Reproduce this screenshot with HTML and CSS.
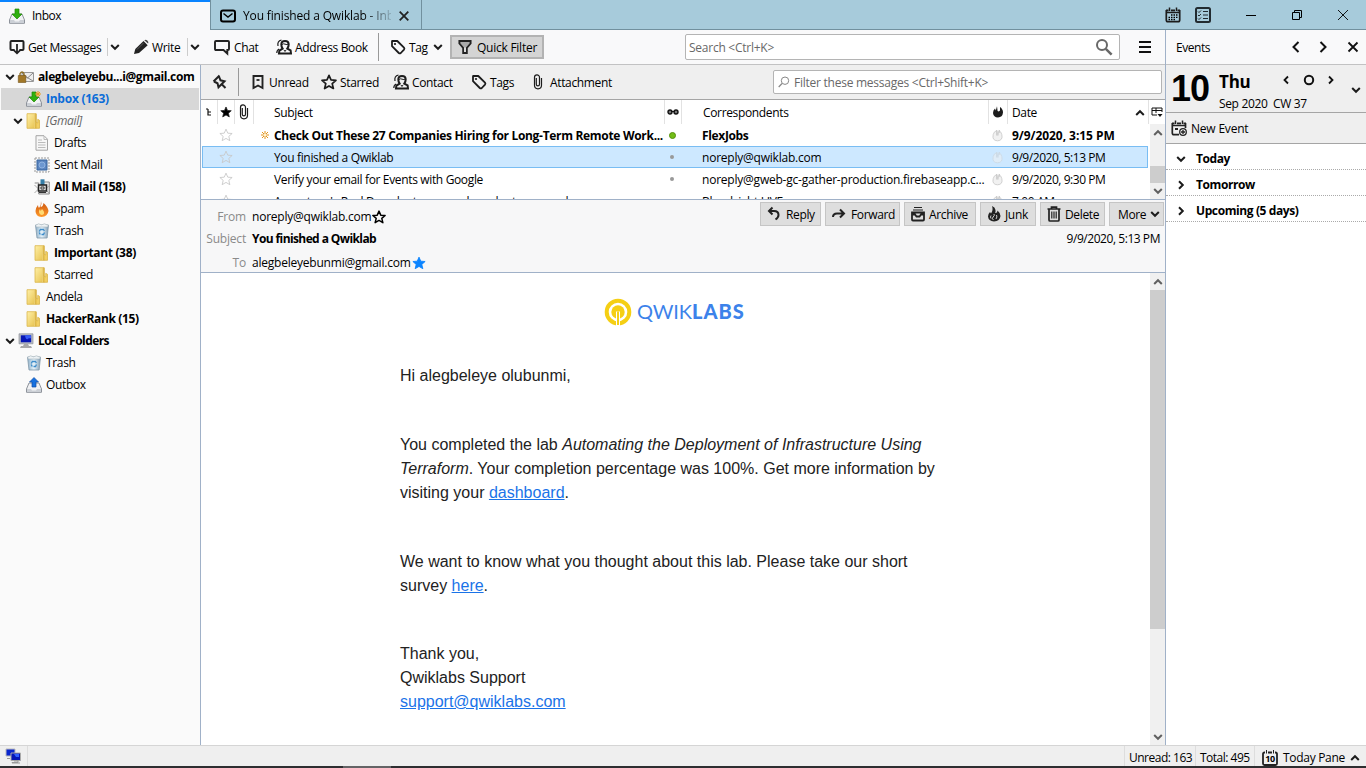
FILE: index.html
```html
<!DOCTYPE html>
<html lang="en">
<head>
<meta charset="utf-8">
<title>Inbox</title>
<link rel="stylesheet" href="styles.css">
</head>
<body>
<svg class="defs" aria-hidden="true">
  <defs>
    <linearGradient id="gold" x1="0" x2="1" y1="0" y2="1"><stop offset="0" stop-color="#fff0a8"/><stop offset="1" stop-color="#e6c04a"/></linearGradient>
    <linearGradient id="fire" x1="0" x2="0" y1="0" y2="1"><stop offset="0" stop-color="#c9500c"/><stop offset="1" stop-color="#ff9a2a"/></linearGradient>
    <linearGradient id="bin" x1="0" x2="1" y1="0" y2="0"><stop offset="0" stop-color="#8fb0c8"/><stop offset=".5" stop-color="#e6f3fb"/><stop offset="1" stop-color="#7f9db5"/></linearGradient>
    <symbol id="down" viewBox="0 0 10 10"><path d="M1.200 3l3.800 3.800L8.800 3" fill="none" stroke="currentColor" stroke-width="2"/></symbol>
    <symbol id="star" viewBox="0 0 16 16"><path d="M8 1.300l2 4.600 5 .4-3.800 3.300 1.200 4.900L8 11.900l-4.400 2.600 1.200-4.900L1 6.300l5-.4z" stroke="currentColor" stroke-linejoin="round"/></symbol>
    <symbol id="tag" viewBox="0 0 16 16"><path d="M2 2.200v5l6.800 6.800q1 .8 2 0l3.200-3.400q.8-1 0-1.900L7.300 2H2.200z" fill="none" stroke="currentColor" stroke-width="1.800" stroke-linejoin="round"/><circle cx="5" cy="5" r="1.100" fill="currentColor"/></symbol>
    <symbol id="person" viewBox="0 0 16 16"><path d="M2 7q-1-5 3.500-6M.8 14q0-3 2.400-4" fill="none" stroke="currentColor" stroke-width="1.200"/><path d="M6.600 9.700Q5.300 7.900 5.300 5.300 5.400 2 9 2t3.700 3.300q0 2.600-1.400 4.400l3.300 1.700.4 3.100H3l.4-2.900z" fill="none" stroke="currentColor" stroke-width="2"/><path d="M6.200 5.600l1.300-.8 3.400.8 1-.3M8 11l1 1.500 1-1.500" fill="none" stroke="currentColor"/></symbol>
    <symbol id="clip" viewBox="0 0 10 16"><path d="M3.300 4v6.200a1.600 1.600 0 003.200 0V3.400a2.500 2.500 0 00-5 0v7.900a3.500 3.500 0 007 0V4" fill="none" stroke="currentColor" stroke-width="1.200"/></symbol>
    <symbol id="inbox" viewBox="0 0 16 16"><path d="M3 6h10l2.500 6v3.300H.5V12z" fill="#f1f2f4" stroke="#8d929a"/><path d="M1 12h4l1 1.500h4l1-1.500h4v3H1z" fill="#ccd0d6"/><path d="M6 1h4v5h3L8 11 3 6h3z" fill="#2fb00f" stroke="#218906" stroke-width=".7"/></symbol>
    <symbol id="folder" viewBox="0 0 16 16"><path d="M1 .7h9v14.600H1z" fill="url(#gold)" stroke="#dbb64c" stroke-width=".8"/><path d="M10 .7V15.300h3.500v-8l-1.800-1V10L10 9z" fill="#f2cf62" stroke="#d6ad3b" stroke-width=".7"/><path d="M8.500 1v14" stroke="#ebce70"/></symbol>
    <symbol id="trash" viewBox="0 0 16 16"><path d="M1.500 2h13l-1.400 13H3z" fill="url(#bin)" stroke="#8198aa" stroke-width=".8"/><path d="M1.500 2.500l3-1.700 3 1 3-1 4 1.700-1 1.500H2.500z" fill="#edf2f5" stroke="#a6b1b9" stroke-width=".6"/><path d="M5.200 8.500l1.200-2h3l1 1.500M10.500 9.500l-1 2h-2M5.200 9.500l1 2" stroke="#3d8cca" fill="none" stroke-width="1.300"/></symbol>
    <symbol id="pc" viewBox="0 0 16 16"><path d="M1 .8h14v10H1z" fill="#b9bdc4" stroke="#8d9199" stroke-width=".7"/><path d="M2.800 2.300h10.400v7H2.800z" fill="#0716b5"/><path d="M7 2.300h6v3q-3-.5-3.500 1-2 .3-2.500-4z" fill="#375cf4"/><path d="M6 11h4l1 2h2l1 2H2l1-2h2z" fill="#a8a8aa"/></symbol>
    <symbol id="flame" viewBox="0 0 16 16"><path d="M8.500.8q1 2.500-.5 5-1 1.700.7 2.300 1.900-.3 1.600-3.600 3.900 3 3.600 6-.3 4.700-5.800 4.900-5.700-.3-6-4.700 0-2.900 2.500-5 0 2 .8 2.700Q7.500 4 8.500.8z" fill="currentColor"/></symbol>
    <symbol id="blaze" viewBox="0 0 12 12"><path d="M5 .3L5.600 5l1.200.6L8 4.500 8 1q3 2 3 5.500-.5 4.800-5 5-4.500-.2-5-4.500Q1 4 3 2.500l.8 2z" fill="currentColor"/></symbol>
    <symbol id="ghost" viewBox="0 0 12 14"><path d="M5.500 1.500Q2 2.500 1.300 6-.2 12.500 6 12.800q6.200-.3 4.700-6.800Q10 2.800 7.500 1.500L6.400 7z" fill="#f1f1f1" stroke="#cdcdcd"/><path d="M5 1v6M8.200 1v3" stroke="#c9c9c9"/></symbol>
    <symbol id="cal" viewBox="0 0 16 16"><path d="M1.300 3v10q0 1.700 1.700 1.700h10q1.700 0 1.700-1.700V3M1 3.300h2.500M6 3.300h4M12.500 3.300H15M1.200 5.500h13.600" fill="none" stroke="currentColor" stroke-width="1.700"/><path d="M4.500.5V4M11.500.5V4" stroke="currentColor" stroke-width="1.500"/></symbol>
  </defs>
</svg>

<header class="tabs">
  <div class="tab tab-on"><svg class="i16"><use href="#inbox"/></svg><span>Inbox</span></div>
  <div class="tab tab-off">
    <svg class="i16" viewBox="0 0 16 16"><rect x="1" y="2.500" width="14" height="11" rx="2" fill="none" stroke="#000" stroke-width="2"/><path d="M3.500 5.500L8 9l4.500-3.500" fill="none" stroke="#000" stroke-width="1.400"/></svg>
    <span class="fade">You finished a Qwiklab - Inb</span>
    <svg class="i10" viewBox="0 0 10 10"><path d="M.7.7l8.600 8.600M9.300.7L.7 9.300" stroke="#222" stroke-width="1.800"/></svg>
  </div>
  <div class="window">
    <svg class="i16" viewBox="0 0 16 16"><use href="#cal"/><path d="M6 8h1.500M8.500 8H10M11 8h1.500M3.500 10.300H5M6 10.300h1.500M8.500 10.300H10M11 10.300h1.500M3.500 12.500H5M6 12.500h1.500M8.500 12.500H10" stroke="#000" stroke-width="1.300"/></svg>
    <svg class="i16" viewBox="0 0 16 16"><rect x="1" y="1" width="14" height="14" rx="1.500" fill="none" stroke="#222b30" stroke-width="2"/><path d="M3 4.500l1 1L6 3.500M3 8l1 1 2-2M3 11.500l1 1 2-2M8 4.500h5M8 8h5M8 11.500h5" stroke="#222b30" fill="none"/></svg>
    <svg class="i12" viewBox="0 0 12 12"><path d="M1 6.500h10" stroke="#000"/></svg>
    <svg class="i12" viewBox="0 0 12 12"><path d="M1.500 3.500h7v7h-7zM3.500 3.500v-2h7v7h-2" fill="none" stroke="#000"/></svg>
    <svg class="i12" viewBox="0 0 12 12"><path d="M1 1l10 10M11 1L1 11" stroke="#000" stroke-width=".9"/></svg>
  </div>
</header>

<div class="middle">
  <div class="work">
    <nav class="toolbar">
      <div class="btn"><svg class="i16" viewBox="0 0 16 16"><path d="M5.500 11H2.500q-1 0-1-1V3q0-1 1-1h11q1 0 1 1v7q0 1-1 1h-3" fill="none" stroke="#222" stroke-width="2"/><path d="M8 5v9M4.500 10.800L8 14.300l3.500-3.500" fill="none" stroke="#222" stroke-width="1.800"/></svg><span>Get Messages</span></div>
      <div class="drop"><svg class="i10"><use href="#down"/></svg></div>
      <div class="btn write"><svg class="i16" viewBox="0 0 16 16"><path d="M0 15l1.300-5L9.500 2l4.200 4.200L5 14z" fill="#222"/><path d="M10.300 1.300q1.500-1 3 .3 1.600 1.500.8 3z" fill="#444"/><path d="M3 10.500l6.500-6.500" stroke="#777" stroke-width=".7"/></svg><span>Write</span></div>
      <div class="drop"><svg class="i10"><use href="#down"/></svg></div>
      <div class="btn chat"><svg class="i16" viewBox="0 0 16 16"><path d="M2 2h12q1 0 1 1v7q0 1-1 1h-.7v3.500L9.500 11H2q-1 0-1-1V3q0-1 1-1z" fill="none" stroke="#222" stroke-width="1.900"/></svg><span>Chat</span></div>
      <div class="btn book"><svg class="i16"><use href="#person"/></svg><span>Address Book</span></div>
      <div class="rule"></div>
      <div class="btn tagb"><svg class="i16"><use href="#tag"/></svg><span>Tag</span><svg class="i10"><use href="#down"/></svg></div>
      <div class="quick"><svg class="i14" viewBox="0 0 14 14"><path d="M1.400 1h11.200v2.500L8.800 8v5H5.200V8L1.400 3.500z" fill="#aaa" stroke="#222" stroke-width="1.900"/><path d="M6.200 7.500h1.600v4.500H6.200z" fill="#eee"/></svg><span>Quick Filter</span></div>
      <div class="search"><span>Search &lt;Ctrl+K&gt;</span><svg class="i18" viewBox="0 0 18 18"><circle cx="7" cy="7" r="5" fill="none" stroke="#686868" stroke-width="2"/><path d="M10.800 10.800l5.800 5.800" stroke="#686868" stroke-width="2.500"/></svg></div>
      <svg class="i12 burger" viewBox="0 0 12 12"><path d="M0 1h12M0 6h12M0 11h12" stroke="#111" stroke-width="2"/></svg>
    </nav>

    <div class="panes">
      <aside class="folders">
        <div class="f l0 b"><svg class="i10"><use href="#down"/></svg><svg class="i16" viewBox="0 0 16 16"><path d="M4 3.500h11.500v9H4z" fill="#eee" stroke="#999"/><path d="M4 12l4.500-4L15 12M4 4l5.500 5L15 4" fill="none" stroke="#888"/><path d="M2 7V4.500q2-3 4 0V7" fill="none" stroke="#8a6a20" stroke-width="1.300"/><path d="M.3 6.500h7.500v7H.3z" fill="#a27828" stroke="#735317" stroke-width=".6"/></svg><span class="acct">alegbeleyebu...i@gmail.com</span></div>
        <div class="f l1 b on"><svg class="i16" viewBox="0 0 16 16"><use href="#inbox"/><path d="M12 0v6M9 3h6M10 1l4 4M14 1l-4 4" stroke="#e99b1b"/></svg><span>Inbox (163)</span></div>
        <div class="f l1a"><svg class="i10"><use href="#down"/></svg><svg class="i16"><use href="#folder"/></svg><span class="it">[Gmail]</span></div>
        <div class="f l2"><svg class="i16" viewBox="0 0 16 16"><path d="M2 .7h8l3.500 3.500v11H2z" fill="#f7f7f7" stroke="#a5a5a5"/><path d="M10 1v3.500h3.500M4 5h4M4 7.500h7.500M4 10h7.500M4 12.500h7.500" stroke="#bbb" fill="none"/></svg><span>Drafts</span></div>
        <div class="f l2"><svg class="i16" viewBox="0 0 16 16"><path d="M1 1h14v14H1z" fill="#f6f6f6" stroke="#999" stroke-dasharray="2 1"/><path d="M3 3h10v10H3z" fill="#5a84bf" stroke="#39669f"/><circle cx="8" cy="8" r="3" fill="#6c97d0" stroke="#8fb3e0"/></svg><span>Sent Mail</span></div>
        <div class="f l2 b"><svg class="i16" viewBox="0 0 16 16"><path d="M.7 4h4v11h10.600V3H10" fill="#e8e8e8" stroke="#888"/><path d="M.5 6l4 4-4 4M15 7l-4 3 4 4" fill="none" stroke="#aaa"/><path d="M6.500.3h4V6h-4z" fill="#357fa9"/><path d="M4.500 6h8v6h-8z" fill="#ddd" stroke="#222" stroke-width="1.500"/><path d="M7 8h3v2H7zM5 13.500h7" fill="#fff" stroke="#333"/></svg><span>All Mail (158)</span></div>
        <div class="f l2"><svg class="i16" viewBox="0 0 16 16"><path d="M7 0q1 3-.5 6Q9 6 9.500 2q4.500 4 5 8-.7 5.500-7 6-6-.5-6-6 0-3 2.500-6 0 2 1 3Q7.500 4 7 0z" fill="url(#fire)"/><path d="M8 8q3 3 1.800 5-2 2-4 0Q4 10.500 6 8l.7 2z" fill="#ffda72"/></svg><span>Spam</span></div>
        <div class="f l2"><svg class="i16"><use href="#trash"/></svg><span>Trash</span></div>
        <div class="f l2 b"><svg class="i16"><use href="#folder"/></svg><span>Important (38)</span></div>
        <div class="f l2"><svg class="i16"><use href="#folder"/></svg><span>Starred</span></div>
        <div class="f l1"><svg class="i16"><use href="#folder"/></svg><span>Andela</span></div>
        <div class="f l1 b"><svg class="i16"><use href="#folder"/></svg><span>HackerRank (15)</span></div>
        <div class="f l0 b"><svg class="i10"><use href="#down"/></svg><svg class="i16"><use href="#pc"/></svg><span class="local">Local Folders</span></div>
        <div class="f l1"><svg class="i16"><use href="#trash"/></svg><span>Trash</span></div>
        <div class="f l1"><svg class="i16" viewBox="0 0 16 16"><path d="M3 6h10l2.500 6v3.300H.5V12z" fill="#f1f2f4" stroke="#8d929a"/><path d="M1 12h4l1 1.500h4l1-1.500h4v3H1z" fill="#ccd0d6"/><path d="M8 .5L12.500 5H10v5H6V5H3.500z" fill="#1671e0" stroke="#124ea6" stroke-width=".7"/></svg><span>Outbox</span></div>
      </aside>

      <main class="mail">
        <div class="filters">
          <svg class="i16 pin" viewBox="0 0 16 16"><path d="M7.500 1.500l6 6M8 2.500l-1.500 3.800-4 1 6 6 1-4L13 7.500M6 9.500l-4.500 4.500" fill="none" stroke="#222" stroke-width="2" transform="translate(16 0) scale(-1 1)"/></svg>
          <div class="rule"></div>
          <div class="btn"><svg class="i16" viewBox="0 0 16 16"><path d="M3.500 2h9v12L8 11.500 3.500 14z" fill="none" stroke="#222" stroke-width="1.900"/><path d="M6.500 6h3" stroke="#222" stroke-width="1.800"/></svg><span>Unread</span></div>
          <div class="btn"><svg class="i16 hollow"><use href="#star"/></svg><span>Starred</span></div>
          <div class="btn"><svg class="i16"><use href="#person"/></svg><span>Contact</span></div>
          <div class="btn"><svg class="i16"><use href="#tag"/></svg><span>Tags</span></div>
          <div class="btn"><svg class="clip"><use href="#clip"/></svg><span>Attachment</span></div>
          <div class="filterbox"><svg class="i12" viewBox="0 0 12 12"><circle cx="7" cy="4.700" r="3.700" fill="none" stroke="#888"/><path d="M4 7.500L.7 11" stroke="#888" stroke-width="1.200"/></svg><span>Filter these messages &lt;Ctrl+Shift+K&gt;</span></div>
        </div>

        <section class="list">
          <div class="row head">
            <i class="c-thread"><svg class="i10" viewBox="0 0 10 10"><path d="M2 2h2M4 2v6h3M4 5h3" fill="none" stroke="#111" stroke-width="1.200"/></svg></i>
            <i class="c-star edge"><svg class="i12"><use href="#star"/></svg></i>
            <i class="c-clip edge"><svg class="clip"><use href="#clip"/></svg></i>
            <span class="c-subj edge">Subject</span>
            <i class="c-read edge"><svg class="i12" viewBox="0 0 12 12"><circle cx="3" cy="6" r="2" fill="#777" stroke="#111" stroke-width="1.400"/><circle cx="9" cy="6" r="2" fill="#777" stroke="#111" stroke-width="1.400"/><path d="M4 5.500h4" stroke="#111"/></svg></i>
            <span class="c-corr edge">Correspondents</span>
            <i class="c-junk edge"><svg class="i12"><use href="#blaze"/></svg></i>
            <span class="c-date edge">Date<svg class="i10 flip"><use href="#down"/></svg></span>
            <i class="c-pick edge"><svg class="i12" viewBox="0 0 12 12"><path d="M6 9H1V2h10v4M1 4.500h10M5 2v5" fill="none" stroke="#111"/><path d="M6.500 8h5L9 11z" fill="#111"/></svg></i>
          </div>
          <div class="rows">
            <div class="lines">
              <div class="row b"><i class="c-thread"></i><i class="c-star pale"><svg class="i14 hollow"><use href="#star"/></svg></i><i class="c-clip"></i><span class="c-subj new"><svg class="i8" viewBox="0 0 8 8"><path d="M4 0v8M0 4h8M1 1l6 6M7 1L1 7" stroke="#e2941c"/><circle cx="4" cy="4" r="1.300" fill="#fff3cf"/></svg><em class="t1">Check Out These 27 Companies Hiring for Long-Term Remote Work...</em></span><i class="c-read"><b class="unread"></b></i><span class="c-corr">FlexJobs</span><i class="c-junk"><svg class="ghost"><use href="#ghost"/></svg></i><span class="c-date bd">9/9/2020, 3:15 PM</span></div>
              <div class="row sel"><i class="c-thread"></i><i class="c-star pale"><svg class="i14 hollow"><use href="#star"/></svg></i><i class="c-clip"></i><span class="c-subj">You finished a Qwiklab</span><i class="c-read"><b class="read"></b></i><span class="c-corr addr">noreply@qwiklab.com</span><i class="c-junk"><svg class="ghost"><use href="#ghost"/></svg></i><span class="c-date when">9/9/2020, 5:13 PM</span></div>
              <div class="row"><i class="c-thread"></i><i class="c-star pale"><svg class="i14 hollow"><use href="#star"/></svg></i><i class="c-clip"></i><span class="c-subj">Verify your email for Events with Google</span><i class="c-read"><b class="read"></b></i><span class="c-corr addr">noreply@gweb-gc-gather-production.firebaseapp.c...</span><i class="c-junk"><svg class="ghost"><use href="#ghost"/></svg></i><span class="c-date when">9/9/2020, 9:30 PM</span></div>
              <div class="row"><i class="c-thread"></i><i class="c-star pale"><svg class="i14 hollow"><use href="#star"/></svg></i><i class="c-clip"></i><span class="c-subj">Augustana's Real Decadent, an even broader to you and</span><i class="c-read"></i><span class="c-corr">Bloodsight LIVE</span><i class="c-junk"><svg class="ghost"><use href="#ghost"/></svg></i><span class="c-date">7:00 AM</span></div>
            </div>
            <div class="bar bar-list"><svg class="i10 flip"><use href="#down"/></svg><div class="thumb"></div><svg class="i10"><use href="#down"/></svg></div>
          </div>
        </section>

        <section class="info">
          <div class="fields">
            <div class="field"><label>From</label><span class="addr">noreply@qwiklab.com</span><svg class="i14 hollow bold"><use href="#star"/></svg></div>
            <div class="field"><label>Subject</label><span class="b title">You finished a Qwiklab</span></div>
            <div class="field"><label>To</label><span class="addr">alegbeleyebunmi@gmail.com</span><svg class="i14 blue"><use href="#star"/></svg></div>
          </div>
          <div class="right">
            <div class="actions">
              <div class="act"><svg class="i16" viewBox="0 0 16 16"><path d="M6.500 1.500L3 5l3.500 3.500M3.500 5H8q4.500 0 4.500 4 0 2.500-3 4.500" fill="none" stroke="#222" stroke-width="2"/></svg><span>Reply</span></div>
              <div class="act"><svg class="i16" viewBox="0 0 16 16"><path d="M2 11q0-3.500 4-3.500h6M9 3.500l4 4-4 4" fill="none" stroke="#222" stroke-width="2"/></svg><span>Forward</span></div>
              <div class="act"><svg class="i16" viewBox="0 0 16 16"><path d="M4 1.500h8M3 4h10" stroke="#222" stroke-width="1.200"/><path d="M2 6.500h12v7q0 1-1 1H3q-1 0-1-1zM2 8.500h3l1.500 2h3l1.500-2h3" fill="none" stroke="#222" stroke-width="1.800"/></svg><span>Archive</span></div>
              <div class="act"><svg class="i16" viewBox="0 0 16 16"><path d="M6 0q3 1 3.500 4 .3 2-.5 3l2-.5.5-2q3 2.500 3 5.500-.5 5-6.500 5.500-5.500-.5-6-5Q2 8 4 6l1 1.500Q7.500 4 6 0z" fill="#222"/><path d="M8 8q1 2-1 3-1.500 2 .5 3M10.500 9q1 2-.5 4M5 9.500q-1 1.500 0 3" fill="none" stroke="#ccc"/></svg><span>Junk</span></div>
              <div class="act"><svg class="i16" viewBox="0 0 16 16"><path d="M1.500 3h13M5.500 3V1.200h5V3M3 3v11q0 1 1 1h8q1 0 1-1V3" fill="none" stroke="#222" stroke-width="1.700"/><path d="M5.800 5.500v7M8 5.500v7M10.200 5.500v7" stroke="#222" stroke-width="1.200"/></svg><span>Delete</span></div>
              <div class="act more"><span>More</span><svg class="i10"><use href="#down"/></svg></div>
            </div>
            <time class="when">9/9/2020, 5:13 PM</time>
          </div>
        </section>

        <section class="reader">
          <article>
            <div class="logo"><svg viewBox="0 0 28 28"><circle cx="14" cy="14" r="11.300" fill="none" stroke="#f5cf14" stroke-width="4"/><circle cx="14" cy="14" r="6.700" fill="#f5cf14"/><path d="M12 28V13.500h4V28z" fill="#fff"/><path d="M13 13.500h2V27h-2z" fill="#f5cf14"/></svg><span class="qwik">QWIK</span><span class="labs">LABS</span></div>
            <p>Hi alegbeleye olubunmi,</p>
            <p>You completed the lab <em>Automating the Deployment of Infrastructure Using<br>Terraform</em>. Your completion percentage was 100%. Get more information by<br>visiting your <a>dashboard</a>.</p>
            <p>We want to know what you thought about this lab. Please take our short<br>survey <a>here</a>.</p>
            <p class="bye">Thank you,<br>Qwiklabs Support<br><a>support@qwiklabs.com</a></p>
          </article>
          <div class="bar bar-read"><svg class="i10 flip"><use href="#down"/></svg><div class="thumb"></div><svg class="i10"><use href="#down"/></svg></div>
        </section>
      </main>
    </div>
  </div>

  <aside class="today">
    <div class="t-head"><span>Events</span>
      <svg class="i12" viewBox="0 0 12 12"><path d="M8.500 1l-5 5 5 5" fill="none" stroke="#111" stroke-width="2"/></svg>
      <svg class="i12" viewBox="0 0 12 12"><path d="M3.500 1l5 5-5 5" fill="none" stroke="#111" stroke-width="2"/></svg>
      <svg class="i12" viewBox="0 0 12 12"><path d="M1.500 1.500l9 9M10.500 1.500l-9 9" stroke="#111" stroke-width="1.800"/></svg></div>
    <div class="t-date">
      <div class="num">10</div>
      <div class="day"><strong>Thu</strong><span>Sep 2020&nbsp; CW 37</span></div>
      <div class="nav">
        <svg class="i10" viewBox="0 0 10 10"><path d="M7 1.500L3.500 5 7 8.500" fill="none" stroke="#111" stroke-width="1.800"/></svg>
        <svg class="i12" viewBox="0 0 12 12"><circle cx="6" cy="6" r="4.200" fill="none" stroke="#111" stroke-width="2"/></svg>
        <svg class="i10" viewBox="0 0 10 10"><path d="M3 1.500L6.500 5 3 8.500" fill="none" stroke="#111" stroke-width="1.800"/></svg>
      </div>
      <svg class="i10 fold"><use href="#down"/></svg>
    </div>
    <div class="t-new"><svg class="i16" viewBox="0 0 16 16"><path d="M8 14.700H3q-1.700 0-1.700-1.700V3M14.500 3v5M1 3.300h2.500M6 3.300h4M12.500 3.300H15M1.200 5.500h13.600" fill="none" stroke="#222" stroke-width="1.700"/><path d="M4.500.5V4M11.500.5V4" stroke="#222" stroke-width="1.500"/><path d="M4 8h3v2H4z" fill="#222"/><circle cx="12" cy="12" r="3.300" fill="#eee" stroke="#222" stroke-width="1.300"/><path d="M10 12h4M12 10v4" stroke="#222" stroke-width="1.300"/></svg><span>New Event</span></div>
    <div class="t-row"><svg class="i10"><use href="#down"/></svg><span>Today</span></div>
    <div class="t-row"><svg class="i10 side"><use href="#down"/></svg><span>Tomorrow</span></div>
    <div class="t-row"><svg class="i10 side"><use href="#down"/></svg><span>Upcoming (5 days)</span></div>
  </aside>
</div>

<footer class="status">
  <div class="net"><svg class="i16" viewBox="0 0 16 16"><path d="M1 1h9v7H1z" fill="#0825ce" stroke="#bbb"/><path d="M6 5h9.500v7.500H6z" fill="#0716b5" stroke="#aaa"/><path d="M9 6h5v3h-3z" fill="#3160ff"/><path d="M9 13h4v1.500H7V15h8" fill="none" stroke="#999"/><path d="M2 10.500h3" stroke="#999"/></svg></div>
  <div class="count">Unread: 163</div>
  <div class="total">Total: 495</div>
  <div class="pane"><span class="minical"><svg class="i16" viewBox="0 0 16 16"><path d="M3 2.500H2.500Q1 2.500 1 4v9.500Q1 15 2.500 15h11q1.500 0 1.500-1.500V4q0-1.500-1.500-1.500H13M6 2.500h4" fill="none" stroke="#222" stroke-width="1.800"/><path d="M4.500 0v3.500M11.500 0v3.500" stroke="#222"/></svg><b>10</b></span><span>Today Pane</span><svg class="i10 flip"><use href="#down"/></svg></div>
</footer>
<div class="edge-strip"><div></div></div>
</body>
</html>
```

FILE: styles.css
```css
* { box-sizing: border-box; }
body {
  margin: 0; width: 1366px; height: 768px; overflow: hidden;
  display: flex; flex-direction: column;
  font: 12px/16px "Open Sans", "Noto Sans", sans-serif;
  letter-spacing: -0.35px; color: #000; background: #fff; white-space: nowrap;
}
svg { display: block; flex: none; overflow: visible; color: #1c1c1c; }
i, em { font-style: normal; }
.b { font-weight: 700; letter-spacing: -0.35px; }
.addr { letter-spacing: -.22px; }
.when { letter-spacing: -.45px; }
.defs { position: absolute; width: 0; height: 0; }
.i8 { width: 8px; height: 8px; }
.i10 { width: 10px; height: 10px; }
.i12 { width: 12px; height: 12px; }
.i14 { width: 14px; height: 14px; }
.i16 { width: 16px; height: 16px; }
.i18 { width: 18px; height: 18px; }
.clip { width: 10px; height: 16px; }
.flip { transform: scaleY(-1); }
.side { transform: rotate(-90deg); }
.hollow { fill: none; stroke-width: 1.7; }

/* Tab strip */
.tabs { display: grid; grid-template-columns: 210px 212px 1fr; height: 30px; background: #a7cbdb; }
.tab { display: flex; align-items: center; }
.tab-on { background: #f9f9fa; border-top: 2px solid #0a84ff; padding-left: 9px; gap: 7px; letter-spacing: -.5px; }
.tab-off { border: 1px solid #71909e; border-top: 0; padding: 2px 12px 0 9px; gap: 7px; letter-spacing: -.15px; }
.fade { width: 148px; margin-right: 1px; overflow: hidden; -webkit-mask-image: linear-gradient(90deg, #000 120px, transparent 153px); mask-image: linear-gradient(90deg, #000 120px, transparent 153px); }
.window { border-bottom: 1px solid #71909e; display: grid; grid-template-columns: 30px 50px 46px 46px 12px; justify-content: end; align-items: center; padding-right: 17px; }

.middle { display: flex; height: 715px; }
.work { width: 1165px; display: flex; flex-direction: column; }
.toolbar { height: 35px; border-bottom: 1px solid #c2c2c3; background: #f9f9fa; padding-left: 9px; display: grid; align-items: center; grid-template-columns: 98px 27px 53px 27px 62px 102px 12px 60px 94px 141px 435px 1fr; }
.btn { display: flex; align-items: center; gap: 3px; }
.btn span, .quick span, .search span, .filterbox span { padding-top: 2px; }
.write { gap: 2px; }
.chat { gap: 4px; }
.tagb .i10 { margin-left: 2px; }
.drop { border-left: 1px solid #ccc; height: 18px; display: flex; align-items: center; padding-left: 2px; }
.rule { width: 1px; height: 28px; background: #999; }
.quick { height: 24px; border: 2px solid #b3b3b3; background: #d4d4d4; display: flex; align-items: center; gap: 5px; padding-left: 6px; letter-spacing: -.25px; }
.search { grid-column: 11; height: 26px; border: 1px solid #b4b4b4; border-radius: 2px; background: #fff; color: #686868; display: flex; align-items: center; justify-content: space-between; padding: 0 6px 0 3px; letter-spacing: -.25px; }
.burger { margin-left: 19px; }

.panes { display: flex; height: 680px; }
.folders { width: 201px; border-right: 1px solid #a0b1c8; background: #fafafa; padding: 1px 1px 0 1px; }
.f { height: 22px; display: flex; align-items: center; gap: 4px; }
.l0 { padding-left: 4px; }
.l0 .i10, .l1a .i10 { margin-right: -1px; }
.l0 .i16 { width: 16px; }
.l1 { padding-left: 25px; }
.l1a { padding-left: 12px; }
.l2 { padding-left: 33px; }
.on { background: #d7d7d7; color: #0a6cd8; margin-left: 0; letter-spacing: -.25px; }
.it { font-style: italic; color: #666; }
.acct { letter-spacing: -.38px; }
.local { letter-spacing: -.55px; }

.mail { width: 964px; display: flex; flex-direction: column; }
.filters { height: 35px; background: #efefef; border-bottom: 1px solid #a5a5a5; display: grid; align-items: center; grid-template-columns: 26px 12px 71px 72px 78px 61px 241px 389px; padding-left: 11px; }
.pin { margin-left: -1px; }
.filters .btn { gap: 4px; }
.filters .btn .i16 { margin-right: -1px; }
.filters .clip { margin-left: 1px; margin-right: 3px; }
.filterbox { height: 24px; border: 1px solid #b4b4b4; border-radius: 2px; background: #fff; color: #686868; display: flex; align-items: center; gap: 4px; padding-left: 4px; letter-spacing: -.25px; }

/* Message list */
.list { height: 100px; border-bottom: 1px solid #a0b1c8; }
.row { display: grid; grid-template-columns: 16px 17px 19px 411px 17px 307px 19px 141px 17px; height: 22px; align-items: center; padding-left: 0; }
.row > * { display: flex; align-items: center; height: 100%; }
.row > span { padding-top: 2px; }
.row i { justify-content: center; }
.head { height: 24px; }
.edge { border-left: 1px solid #e2e2e2; }
.head .i12 { fill: #000; }
.row .c-subj { padding-left: 21px; }
.head .c-subj, .head .c-corr { padding-left: 20px; }
.row .new { padding-left: 8px; gap: 5px; }
.new svg { margin-top: -2px; }
.t1 { letter-spacing: -.31px; }
.row .c-corr { padding-left: 21px; }
.row .c-date { padding-left: 5px; justify-content: space-between; padding-right: 3px; }
.head .c-date { padding-left: 4px; }
.bd { letter-spacing: -.05px; }
.rows { height: 75px; display: flex; overflow: hidden; }
.lines { width: 949px; }
.lines .row { grid-template-columns: 16px 17px 19px 411px 17px 307px 19px 143px; margin-left: 0; }
.lines .row .c-date { justify-content: flex-start; }
.sel { background: #cde8ff; outline: 1px solid #79bdf3; outline-offset: -1px; margin: 0 2px 0 1px !important; grid-template-columns: 15px 17px 19px 411px 17px 307px 19px 1fr !important; }
.pale svg { color: #c8c8c8; stroke-width: 1; }
.ghost { width: 11px; height: 13px; }
.sel .ghost { opacity: .5; }
.unread, .read { display: block; width: 7px; height: 7px; border-radius: 50%; background: #72bd16; border: 1px solid #55910c; margin-right: 1px; }
.read { width: 4px; height: 4px; background: #999; border: 0; }
.bar { width: 15px; background: #f0f0f0; display: grid; justify-items: center; align-items: center; }
.bar svg { color: #606060; }
.bar .thumb { width: 15px; height: 100%; background: #cdcdcd; align-self: start; }
.bar-list { grid-template-rows: 17px 25px 17px 16px; }
.bar-list .thumb { grid-row: 3; }
.bar-list svg:last-child { grid-row: 4; }
.bar-read { grid-template-rows: 17px 339px 1fr 17px; }
.bar-read svg:last-child { grid-row: 4; }

.info { height: 73px; background: #f7f7f8; border-bottom: 1px solid #a0b1c8; display: flex; justify-content: space-between; }
.fields { padding-top: 6px; }
.field { display: flex; align-items: center; height: 22px; gap: 1px; }
.field:last-child { margin-top: 2px; }
.field label { width: 45px; text-align: right; color: #8a8a8a; margin-right: 5px; letter-spacing: -.2px; }
.title { letter-spacing: -.6px; }
.bold { color: #000; }
.blue { color: #0a84ff; fill: #0a84ff; }
.right { display: flex; flex-direction: column; align-items: flex-end; padding: 2px 1px 0 0; }
.actions { display: grid; grid-template-columns: 61px 75px 72px 56px 65px 55px; gap: 4px; }
.act { height: 24px; background: #dedede; border: 1px solid #c5c5c5; display: flex; align-items: center; gap: 3px; padding-left: 5px; }
.act span { padding-top: 2px; }
.act:nth-child(1), .act:nth-child(2) { padding-left: 5px; gap: 4px; }
.more { padding-left: 8px; gap: 4px; }
.right time { margin: 5px 4px 0 0; }

/* Message body */
.reader { height: 472px; display: flex; justify-content: space-between; }
article { margin-left: 199px; width: 550px; padding-top: 24px; font: 16px/24px "Liberation Sans", Arial, sans-serif; color: #222; letter-spacing: 0; }
p { margin: 0 0 45px; }
p:nth-of-type(3) { margin-bottom: 44px; }
article em { font-style: italic; }
a { color: #1a73e8; text-decoration: underline; }
.logo { height: 30px; margin: 0 0 37px 204px; display: flex; align-items: center; color: #3c82ea; font-family: Lato, sans-serif; font-size: 20px; }
.logo svg { width: 28px; height: 28px; margin-right: 5px; }
.logo span { padding-bottom: 2px; }
.qwik { font-weight: 400; letter-spacing: -.1px; }
.labs { font-weight: 900; letter-spacing: 1px; }

/* Today pane */
.today { width: 201px; border-left: 1px solid #a0b1c8; background: #fff; }
.t-head { height: 35px; border-bottom: 1px solid #c2c2c3; background: #f9f9fa; display: grid; grid-template-columns: 114px 27px 30px 12px; align-items: center; padding-left: 10px; }
.t-head span { padding-top: 2px; letter-spacing: -.45px; }
.t-date { height: 48px; background: #efefef; border-bottom: 1px solid #a5a5a5; display: grid; grid-template-columns: 48px 62px 70px 10px; padding-left: 5px; }
.num { font: bold 36px/47px "Liberation Sans", Arial, sans-serif; letter-spacing: -1px; }
.day { padding-top: 4px; }
.day strong { display: block; font-size: 17px; line-height: 25px; letter-spacing: -.2px; }
.day span { display: block; line-height: 19px; }
.nav { display: grid; grid-template-columns: 22px 23px 10px; height: 30px; align-items: center; padding-left: 0; }
.fold { margin-top: 20px; }
.t-new { height: 31px; background: #efefef; border-bottom: 1px solid #a5a5a5; display: flex; align-items: center; gap: 4px; padding-left: 5px; letter-spacing: -.4px; }
.t-new span { padding-top: 2px; letter-spacing: -.2px; }
.t-row { height: 26px; border-bottom: 1px dotted #aaa; display: flex; align-items: center; gap: 10px; padding: 4px 0 0 10px; font-weight: 700; letter-spacing: -.4px; }

.status { height: 21px; background: #efefef; border-top: 1px solid #d5d5d5; display: grid; grid-template-columns: 28px 1fr 71px 59px 112px; }
.status > div { display: flex; align-items: center; padding-top: 3px; }
.net { padding-left: 5px !important; border-right: 1px solid #ddd; }
.net svg { margin-top: -3px; }
.count { grid-column: 3; border-left: 1px solid #ddd; padding-left: 4px; letter-spacing: -.5px; }
.total { border-left: 1px solid #ddd; padding-left: 4px; letter-spacing: -.5px; }
.pane { border-left: 1px solid #ddd; padding-left: 7px; gap: 5px; letter-spacing: -.3px; }
.minical { display: grid; width: 16px; height: 16px; }
.minical > * { grid-area: 1 / 1; }
.minical b { font-size: 9px; line-height: 18px; text-align: center; letter-spacing: -.5px; }
.edge-strip { height: 2px; background: #2e2e30; padding-left: 343px; }
.edge-strip div { width: 48px; height: 2px; background: #646466; }
```
